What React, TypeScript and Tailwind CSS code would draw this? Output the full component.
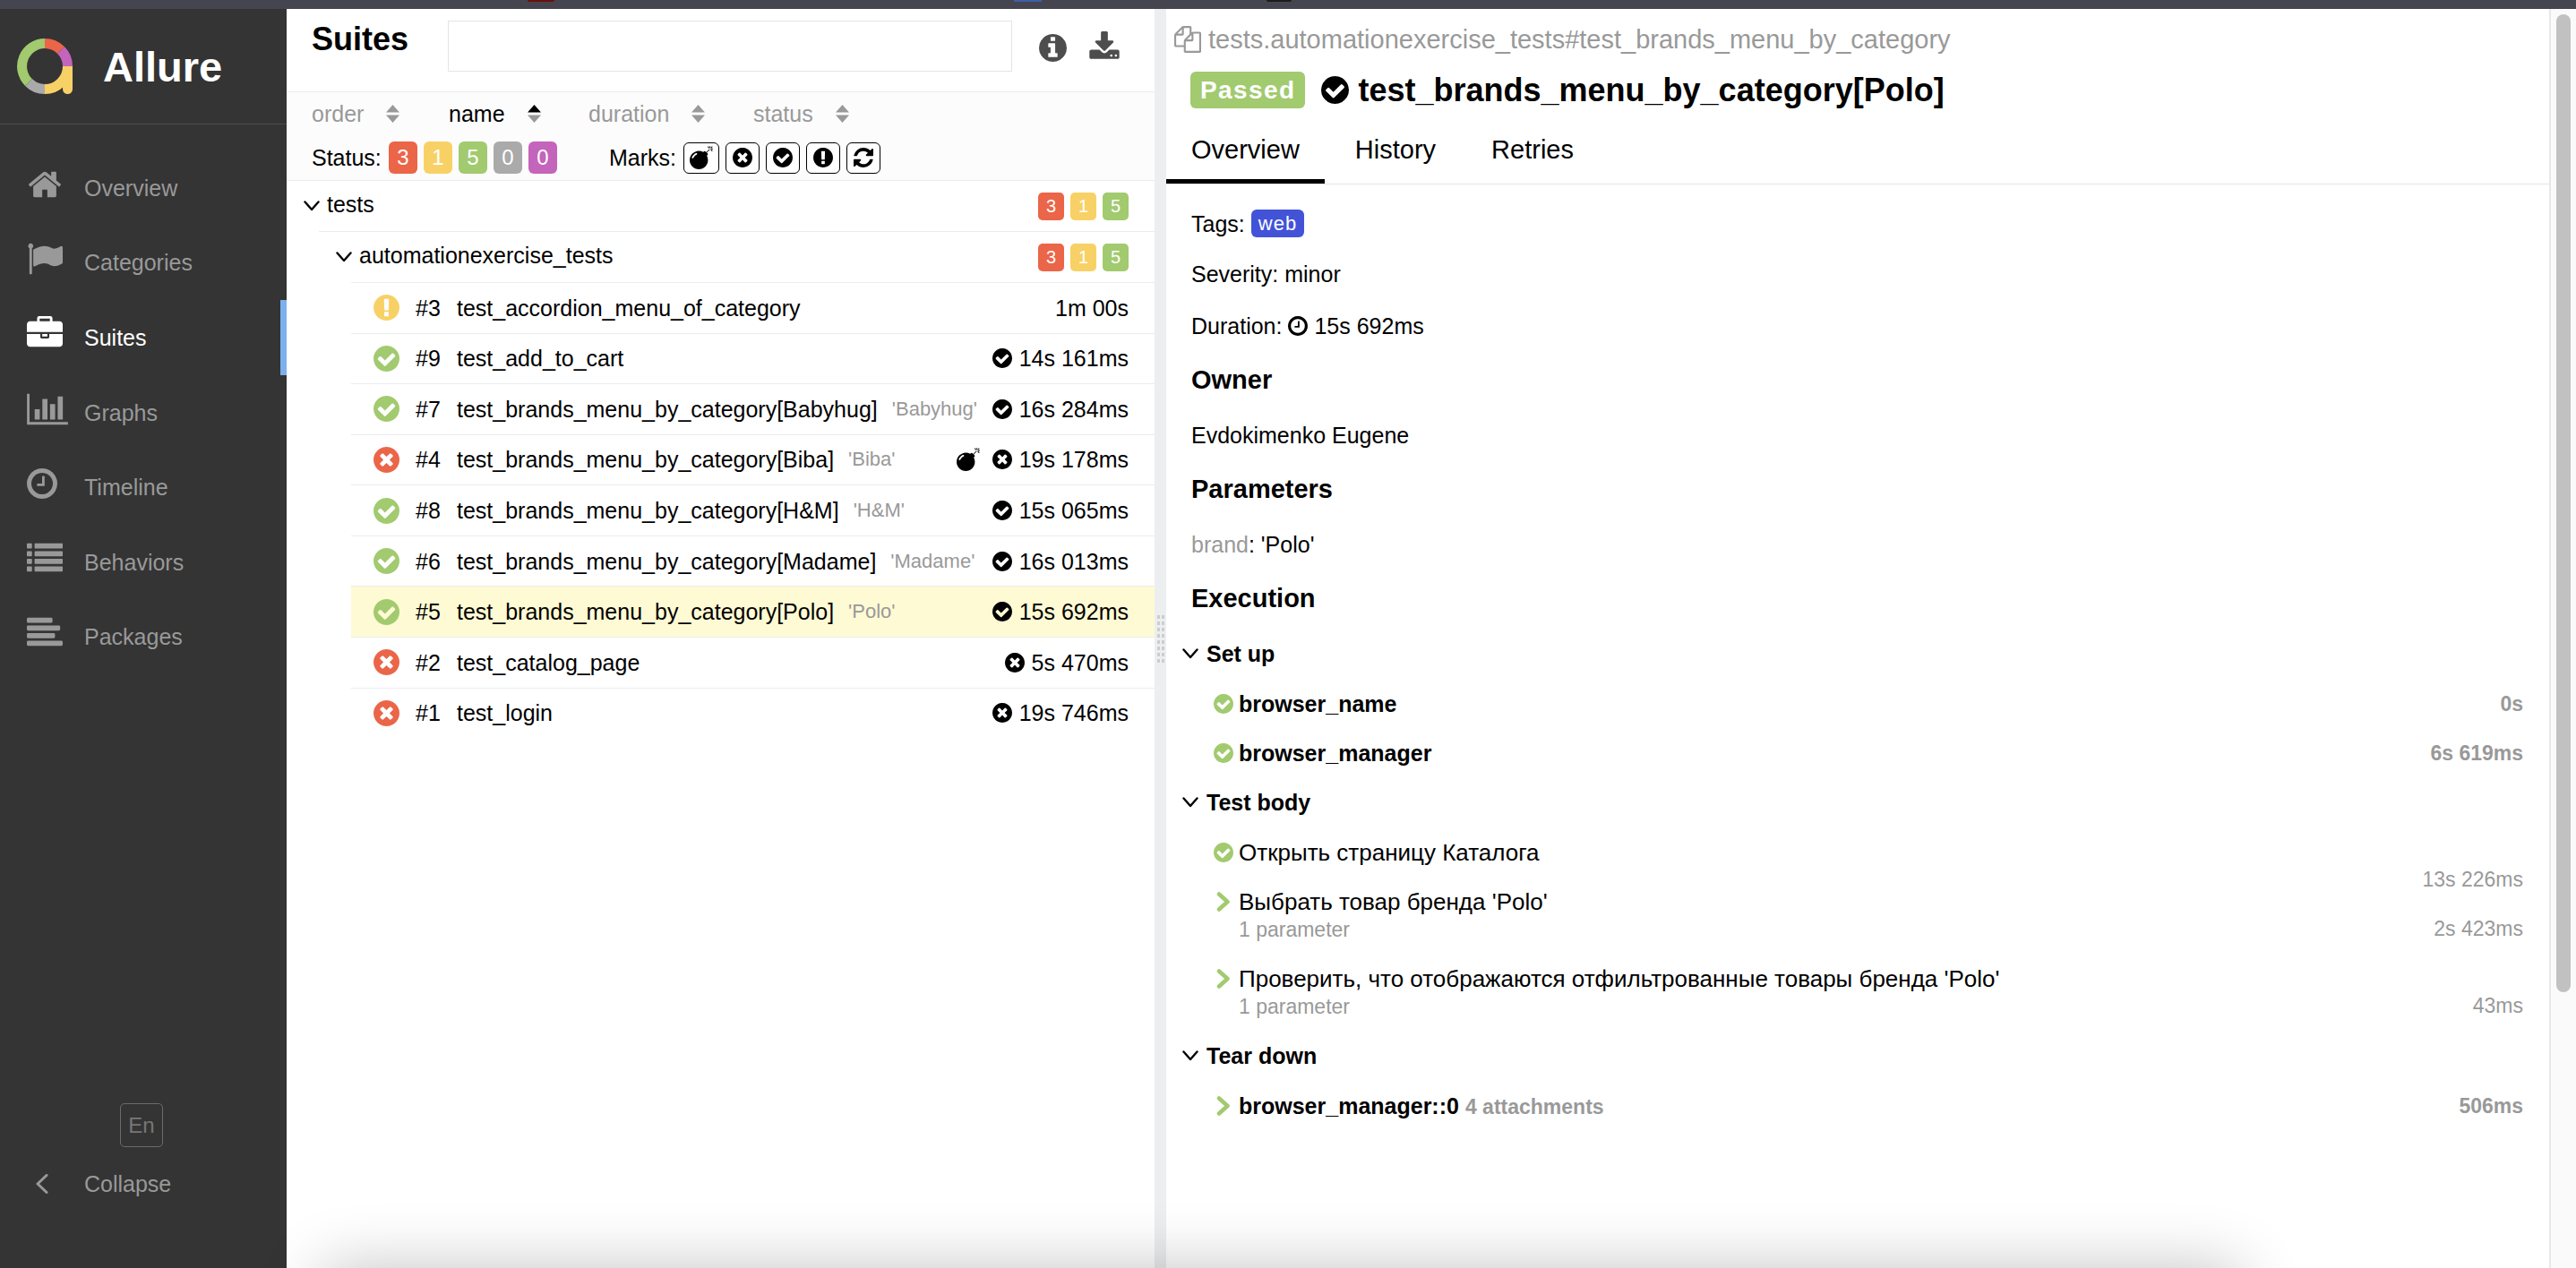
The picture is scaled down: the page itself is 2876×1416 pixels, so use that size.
import React from "react";

const GLYPHS = {
  check:
    "M1412 734q0-28-18-46l-91-90q-19-19-45-19t-45 19l-408 407-226-226q-19-19-45-19t-45 19l-91 90q-18 18-18 46 0 27 18 45l362 362q19 19 45 19 27 0 46-19l543-543q18-18 18-45zm252 162q0 209-103 385.5t-279.5 279.5-385.5 103-385.5-103-279.5-279.5-103-385.5 103-385.5 279.5-279.5 385.5-103 385.5 103 279.5 279.5 103 385.5z",
  times:
    "M1277 1122q0-26-19-45l-181-181 181-181q19-19 19-45 0-27-19-46l-90-90q-19-19-46-19-26 0-45 19l-181 181-181-181q-19-19-45-19-27 0-46 19l-90 90q-19 19-19 46 0 26 19 45l181 181-181 181q-19 19-19 45 0 27 19 46l90 90q19 19 46 19 26 0 45-19l181-181 181 181q19 19 45 19 27 0 46-19l90-90q19-19 19-46zm387-226q0 209-103 385.5t-279.5 279.5-385.5 103-385.5-103-279.5-279.5-103-385.5 103-385.5 279.5-279.5 385.5-103 385.5 103 279.5 279.5 103 385.5z",
  exclamation:
    "M896 128q209 0 385.5 103t279.5 279.5 103 385.5-103 385.5-279.5 279.5-385.5 103-385.5-103-279.5-279.5-103-385.5 103-385.5 279.5-279.5 385.5-103zm128 1247v-190q0-14-9-23.5t-22-9.5h-192q-13 0-23 10t-10 23v190q0 13 10 23t23 10h192q13 0 22-9.5t9-23.5zm-2-344l18-621q0-12-10-18-10-8-24-8h-220q-14 0-24 8-10 6-10 18l17 621q0 10 10 17.5t24 7.5h185q14 0 23.5-7.5t10.5-17.5z",
  info: "M1152 1376v-160q0-14-9-23t-23-9h-96v-512q0-14-9-23t-23-9h-320q-14 0-23 9t-9 23v160q0 14 9 23t23 9h96v320h-96q-14 0-23 9t-9 23v160q0 14 9 23t23 9h448q14 0 23-9t9-23zm-128-896v-160q0-14-9-23t-23-9h-192q-14 0-23 9t-9 23v160q0 14 9 23t23 9h192q14 0 23-9t9-23zm640 416q0 209-103 385.5t-279.5 279.5-385.5 103-385.5-103-279.5-279.5-103-385.5 103-385.5 279.5-279.5 385.5-103 385.5 103 279.5 279.5 103 385.5z",
  clock:
    "M1024 544v448q0 14-9 23t-23 9h-320q-14 0-23-9t-9-23v-64q0-14 9-23t23-9h224v-352q0-14 9-23t23-9h64q14 0 23 9t9 23zm416 352q0-148-73-273t-198-198-273-73-273 73-198 198-73 273 73 273 198 198 273 73 273-73 198-198 73-273zm224 0q0 209-103 385.5t-279.5 279.5-385.5 103-385.5-103-279.5-279.5-103-385.5 103-385.5 279.5-279.5 385.5-103 385.5 103 279.5 279.5 103 385.5z",
  refresh:
    "M1639 1056q0 5-1 7-64 268-268 434.5t-478 166.5q-146 0-282.5-55t-243.5-157l-129 129q-19 19-45 19t-45-19-19-45v-448q0-26 19-45t45-19h448q26 0 45 19t19 45-19 45l-137 137q71 66 161 102t187 36q134 0 250-65t186-179q11-17 53-117 8-23 30-23h192q13 0 22.5 9.5t9.5 22.5zm25-800v448q0 26-19 45t-45 19h-448q-26 0-45-19t-19-45 19-45l138-138q-148-137-349-137-134 0-250 65t-186 179q-11 17-53 117-8 23-30 23h-199q-13 0-22.5-9.5t-9.5-22.5v-7q65-268 270-434.5t480-166.5q146 0 284 55.5t245 156.5l130-129q19-19 45-19t45 19 19 45z",
  home: "M1472 992v480q0 26-19 45t-45 19h-384v-384h-256v384h-384q-26 0-45-19t-19-45v-480q0-1 .5-3t.5-3l575-474 575 474q1 2 1 6zm223-69l-62 74q-8 9-21 11h-3q-13 0-21-7l-692-577-692 577q-12 8-24 7-13-2-21-11l-62-74q-8-10-7-23.5t11-21.5l719-599q32-26 76-26t76 26l244 204v-195q0-14 9-23t23-9h192q14 0 23 9t9 23v408l219 182q10 8 11 21.5t-7 23.5z",
  flag: "M320 256q0 72-64 110v1266q0 13-9.5 22.5t-22.5 9.5h-64q-13 0-22.5-9.5t-9.5-22.5v-1266q-64-38-64-110 0-53 37.5-90.5t90.5-37.5 90.5 37.5 37.5 90.5zm1472 64v763q0 25-12.5 38.5t-39.5 27.5q-215 116-369 116-61 0-123.5-22t-108.5-48-115.5-48-142.5-22q-192 0-464 146-17 9-33 9-26 0-45-19t-19-45v-742q0-32 31-55 21-14 79-43 236-120 421-120 107 0 200 29t219 88q38 19 88 19 54 0 117.5-21t110-47 88-47 54.5-21q26 0 45 19t19 45z",
  briefcase:
    "M640 256h512v-128h-512v128zm1152 640v480q0 66-47 113t-113 47h-1472q-66 0-113-47t-47-113v-480h672v160q0 26 19 45t45 19h320q26 0 45-19t19-45v-160h672zm-768 0v128h-256v-128h256zm768-480v384h-1792v-384q0-66 47-113t113-47h352v-160q0-40 28-68t68-28h576q40 0 68 28t28 68v160h352q66 0 113 47t47 113z",
  chart:
    "M640 896v512h-256v-512h256zm384-512v1024h-256v-1024h256zm1024 1152v128h-2048v-1536h128v1408h1920zm-640-896v768h-256v-768h256zm384-384v1152h-256v-1152h256z",
  list: "M0 1312q0-32 32-32h192q32 0 32 32v192q0 32-32 32h-192q-32 0-32-32zM0 928q0-32 32-32h192q32 0 32 32v192q0 32-32 32h-192q-32 0-32-32zM0 544q0-32 32-32h192q32 0 32 32v192q0 32-32 32h-192q-32 0-32-32zM0 160q0-32 32-32h192q32 0 32 32v192q0 32-32 32h-192q-32 0-32-32zM384 1312q0-32 32-32h1344q32 0 32 32v192q0 32-32 32h-1344q-32 0-32-32zM384 928q0-32 32-32h1344q32 0 32 32v192q0 32-32 32h-1344q-32 0-32-32zM384 544q0-32 32-32h1344q32 0 32 32v192q0 32-32 32h-1344q-32 0-32-32zM384 160q0-32 32-32h1344q32 0 32 32v192q0 32-32 32h-1344q-32 0-32-32z",
  align:
    "M0 1344q0-64 64-64h1664q64 0 64 64v128q0 64-64 64h-1664q-64 0-64-64zM0 960q0-64 64-64h1280q64 0 64 64v128q0 64-64 64h-1280q-64 0-64-64zM0 576q0-64 64-64h1536q64 0 64 64v128q0 64-64 64h-1536q-64 0-64-64zM0 192q0-64 64-64h1152q64 0 64 64v128q0 64-64 64h-1152q-64 0-64-64z",
  bomb: "M571 589q-10-25-34-35t-49 0q-108 44-191 127t-127 191q-10 25 0 49t35 34q13 5 24 5 42 0 60-40 34-84 98.5-148.5t148.5-98.5q25-11 35-35t0-49zm942-356l46 46-244 243 68 68q19 19 19 45.5t-19 45.5l-64 64q89 161 89 343 0 143-55.5 273.5t-150 225-225 150-273.5 55.5-273.5-55.5-225-150-150-225-55.5-273.5 55.5-273.5 150-225 225-150 273.5-55.5q182 0 343 89l64-64q19-19 45.5-19t45.5 19l68 68zm8-56q-10 10-22 10-13 0-23-10l-91-90q-9-10-9-23t9-23q10-9 23-9t23 9l90 91q10 9 10 22.5t-10 22.5zm230 230q-11 9-23 9t-23-9l-90-91q-10-9-10-22.5t10-22.5q9-10 22.5-10t22.5 10l91 90q9 10 9 23t-9 23zm41-183q0 14-9 23t-23 9h-96q-14 0-23-9t-9-23 9-23 23-9h96q14 0 23 9t9 23zm-192-192v96q0 14-9 23t-23 9-23-9-9-23v-96q0-14 9-23t23-9 23 9 9 23zm151 55l-91 90q-10 10-22 10-13 0-23-10-10-9-10-22.5t10-22.5l90-91q10-9 23-9t23 9q9 10 9 23t-9 23z",
  download:
    "M1344 1344q0-26-19-45t-45-19-45 19-19 45 19 45 45 19 45-19 19-45zm256 0q0-26-19-45t-45-19-45 19-19 45 19 45 45 19 45-19 19-45zm128-224v320q0 40-28 68t-68 28h-1472q-40 0-68-28t-28-68v-320q0-40 28-68t68-28h465l135 136q58 56 136 56t136-56l136-136h464q40 0 68 28t28 68zm-325-569q17 41-14 70l-448 448q-18 19-45 19t-45-19l-448-448q-31-29-14-70 17-39 59-39h256v-448q0-26 19-45t45-19h256q26 0 45 19t19 45v448h256q42 0 59 39z",
  copy: "M1696 384q40 0 68 28t28 68v1216q0 40-28 68t-68 28h-960q-40 0-68-28t-28-68v-288h-544q-40 0-68-28t-28-68v-672q0-40 20-88t48-76l408-408q28-28 76-48t88-20h416q40 0 68 28t28 68v328q68-40 128-40h416zm-544 213l-299 299h299v-299zm-640-384l-299 299h299v-299zm196 647l316-316v-416h-384v416q0 40-28 68t-68 28h-416v640h512v-256q0-40 20-88t48-76zm956 804v-1152h-384v416q0 40-28 68t-68 28h-416v640h896z",
};

type Glyph = keyof typeof GLYPHS;

function Icon({
  name,
  className,
  box = "0 0 1792 1792",
}: {
  name: Glyph;
  className: string;
  box?: string;
}) {
  return (
    <svg viewBox={box} fill="currentColor" aria-hidden="true" className={"shrink-0 " + className}>
      <path d={GLYPHS[name]} />
    </svg>
  );
}

/** Round glyphs occupy 1536 of the 1792 units; this box trims their side space. */
const TIGHT = "128 128 1536 1536";

function DownArrow() {
  return (
    <svg
      viewBox="0 0 18 12"
      fill="none"
      stroke="currentColor"
      strokeWidth="2.4"
      strokeLinecap="round"
      strokeLinejoin="round"
      aria-hidden="true"
      className="h-3 w-[18px] shrink-0"
    >
      <path d="M1.5 1.5L9 10L16.5 1.5" />
    </svg>
  );
}

function Logo() {
  return (
    <svg viewBox="0 0 62 64" fill="none" aria-hidden="true" className="h-16 w-[62px] shrink-0">
      <g strokeWidth="11">
        <path d="M31 6.5A25.5 25.5 0 0 1 49 14" stroke="#eb6549" />
        <path d="M49 14A25.5 25.5 0 0 1 56.500 32" stroke="#c464bb" />
        <path d="M56.500 32A25.5 25.5 0 0 1 31 57.500" stroke="#f8d166" />
        <path d="M31 57.500A25.5 25.5 0 0 1 13 50" stroke="#aaa" />
        <path d="M13 50A25.5 25.5 0 0 1 31 6.500" stroke="#a2ca6f" />
      </g>
      <path d="M51 32H62V57.500a5.500 5.500 0 0 1-11 0Z" fill="#f8d166" />
    </svg>
  );
}

const NAV: { label: string; icon: Glyph; box?: string; size: string; active?: boolean }[] = [
  { label: "Overview", icon: "home", size: "h-10 w-10" },
  { label: "Categories", icon: "flag", size: "h-10 w-10" },
  { label: "Suites", icon: "briefcase", size: "h-10 w-10", active: true },
  { label: "Graphs", icon: "chart", box: "0 0 2048 1792", size: "h-10 w-[46px]" },
  { label: "Timeline", icon: "clock", box: "128 0 1536 1792", size: "h-10 w-[34px]" },
  { label: "Behaviors", icon: "list", size: "h-10 w-10" },
  { label: "Packages", icon: "align", size: "h-10 w-10" },
];

function Sidebar() {
  return (
    <aside className="flex w-[320px] shrink-0 flex-col bg-[#343434] text-[#999]">
      <a href="#" className="flex h-[129px] items-center gap-[34px] border-b border-[#4d4d4d] pl-[19px] text-white">
        <Logo />
        <span className="text-[47px] leading-none font-bold">Allure</span>
      </a>
      <nav className="mt-[29px] flex h-[585px] flex-col">
        {NAV.map((n) => (
          <a
            key={n.label}
            href="#"
            className={
              n.active
                ? "flex flex-1 items-center border-r-[7px] border-[#7ab1ee] pl-[30px] text-white"
                : "flex flex-1 items-center pl-[30px]"
            }
          >
            <span className="mb-2 w-16">
              <Icon name={n.icon} box={n.box} className={n.size} />
            </span>
            {n.label}
          </a>
        ))}
      </nav>
      <div className="mt-auto mb-[77px] flex flex-col gap-6">
        <button className="ml-[134px] h-[49px] w-12 rounded-[5px] border border-[#6b6b6b] text-2xl text-[#777]">
          En
        </button>
        <button className="flex h-[34px] items-center text-left">
          <span className="w-[94px] pl-10">
            <svg
              viewBox="0 0 14 22"
              fill="none"
              stroke="currentColor"
              strokeWidth="3"
              strokeLinecap="round"
              strokeLinejoin="round"
              aria-hidden="true"
              className="h-[22px] w-3.5"
            >
              <path d="M12 1.500L2 11L12 20.500" />
            </svg>
          </span>
          Collapse
        </button>
      </div>
    </aside>
  );
}

function Sorter({ label, asc, className }: { label: string; asc?: boolean; className: string }) {
  return (
    <button className={"flex items-center text-left " + (asc ? "text-black " : "text-[#999] ") + className}>
      {label}
      <svg viewBox="0 0 15 20" aria-hidden="true" className="h-5 w-[15px]">
        <path d="M7.500 0L15 8.500H0Z" fill={asc ? "#000" : "#999"} />
        <path d="M7.500 20L15 11.500H0Z" fill="#999" />
      </svg>
    </button>
  );
}

const STATUS = [
  { label: "failed", n: 3, bg: "bg-[#eb6549]" },
  { label: "broken", n: 1, bg: "bg-[#f8d166]" },
  { label: "passed", n: 5, bg: "bg-[#a2ca6f]" },
  { label: "skipped", n: 0, bg: "bg-[#aaa]" },
  { label: "unknown", n: 0, bg: "bg-[#c464bb]" },
];

const MARKS: { label: string; icon: Glyph; wide?: boolean }[] = [
  { label: "Newly failed", icon: "bomb", wide: true },
  { label: "Newly broken", icon: "times" },
  { label: "Newly passed", icon: "check" },
  { label: "Flaky", icon: "exclamation" },
  { label: "Retried", icon: "refresh" },
];

type Test = {
  n: number;
  name: string;
  param?: string;
  status: "broken" | "passed" | "failed";
  time: string;
  bomb?: boolean;
  mark?: Glyph;
  selected?: boolean;
};

const TESTS: Test[] = [
  { n: 3, name: "test_accordion_menu_of_category", status: "broken", time: "1m 00s" },
  { n: 9, name: "test_add_to_cart", status: "passed", time: "14s 161ms", mark: "check" },
  { n: 7, name: "test_brands_menu_by_category[Babyhug]", param: "'Babyhug'", status: "passed", time: "16s 284ms", mark: "check" },
  { n: 4, name: "test_brands_menu_by_category[Biba]", param: "'Biba'", status: "failed", time: "19s 178ms", mark: "times", bomb: true },
  { n: 8, name: "test_brands_menu_by_category[H&M]", param: "'H&M'", status: "passed", time: "15s 065ms", mark: "check" },
  { n: 6, name: "test_brands_menu_by_category[Madame]", param: "'Madame'", status: "passed", time: "16s 013ms", mark: "check" },
  { n: 5, name: "test_brands_menu_by_category[Polo]", param: "'Polo'", status: "passed", time: "15s 692ms", mark: "check", selected: true },
  { n: 2, name: "test_catalog_page", status: "failed", time: "5s 470ms", mark: "times" },
  { n: 1, name: "test_login", status: "failed", time: "19s 746ms", mark: "times" },
];

const STATUS_ICON: Record<Test["status"], Glyph> = { broken: "exclamation", passed: "check", failed: "times" };
const STATUS_COLOR: Record<Test["status"], string> = {
  broken: "text-[#f8d166]",
  passed: "text-[#a2ca6f]",
  failed: "text-[#eb6549]",
};

function GroupRow({ label }: { label: string }) {
  return (
    <button className="flex h-14 w-full items-center gap-2 pr-[29px] pl-[19px] text-left">
      <DownArrow />
      <span className="pb-1">{label}</span>
      <span className="ml-auto flex gap-[7px] text-xl leading-[31px] text-white">
        {STATUS.slice(0, 3).map((s) => (
          <span key={s.label} className={"w-[29px] rounded-[5px] text-center " + s.bg}>
            {s.n}
          </span>
        ))}
      </span>
    </button>
  );
}

function TestRow({ t }: { t: Test }) {
  return (
    <li className="flex flex-1 border-b border-[#ebecee] last:border-0">
      <a
        href="#"
        className={"flex flex-1 items-center pr-[29px] pl-[25px] whitespace-nowrap " + (t.selected ? "bg-[#fefad3]" : "")}
      >
        <Icon name={STATUS_ICON[t.status]} box={TIGHT} className={"h-[29px] w-[29px] " + STATUS_COLOR[t.status]} />
        <span className="w-16 pl-[18px]">#{t.n}</span>
        <span>{t.name}</span>
        {t.param && <span className="ml-4 text-[22px] text-[#999]">{t.param}</span>}
        <span className="ml-auto flex items-center">
          {t.bomb && <Icon name="bomb" className="mr-3.5 h-[26px] w-[26px]" />}
          {t.mark && <Icon name={t.mark} box={TIGHT} className="mr-2 h-[22px] w-[22px]" />}
          {t.time}
        </span>
      </a>
    </li>
  );
}

function SuitesPane() {
  return (
    <section className="bg-white">
      <header className="flex h-[92px] pt-[13px]">
        <h1 className="w-[180px] pl-7 text-4xl leading-[42px] font-bold">Suites</h1>
        <input aria-label="Search" className="h-[57px] min-w-0 flex-1 border border-[#e4e4e4] bg-white px-3 outline-none" />
        <button aria-label="Info" className="mt-[15px] ml-[30px] h-[31px] text-[#4d4d4d]">
          <Icon name="info" box={TIGHT} className="h-[31px] w-[31px]" />
        </button>
        <button aria-label="Download CSV" className="mt-3 mr-[38px] ml-6 h-9 text-[#4d4d4d]">
          <Icon name="download" className="h-9 w-9" />
        </button>
      </header>
      <div className="h-[100px] border-y border-[#ebecee] bg-[#fcfcfc] pl-7 leading-9">
        <div className="flex pt-1.5">
          <Sorter label="order" className="w-[153px] gap-[25px]" />
          <Sorter label="name" asc className="w-[156px] gap-[25px]" />
          <Sorter label="duration" className="w-[184px] gap-[25px]" />
          <Sorter label="status" className="gap-[25px]" />
        </div>
        <div className="mt-[13px] flex items-center">
          <span className="w-[86px]">Status:</span>
          <div className="flex w-[246px] gap-[7px] text-2xl leading-9 text-white">
            {STATUS.map((s) => (
              <button key={s.label} aria-label={s.label} className={"h-9 w-8 rounded-md " + s.bg}>
                {s.n}
              </button>
            ))}
          </div>
          <span className="w-[83px]">Marks:</span>
          <div className="flex gap-[7px]">
            {MARKS.map((m) => (
              <button
                key={m.label}
                aria-label={m.label}
                className={
                  "flex h-[35px] items-center justify-center rounded-md border border-black bg-white " +
                  (m.wide ? "w-10" : "w-[38px]")
                }
              >
                {m.wide ? (
                  <Icon name={m.icon} className="h-[26px] w-[26px]" />
                ) : (
                  <Icon name={m.icon} box={TIGHT} className="h-[22px] w-[22px]" />
                )}
              </button>
            ))}
          </div>
        </div>
      </div>
      <GroupRow label="tests" />
      <div className="ml-9 border-t border-[#ebecee]">
        <GroupRow label="automationexercise_tests" />
      </div>
      <ul className="ml-[72px] flex h-[509px] flex-col border-t border-[#ebecee]">
        {TESTS.map((t) => (
          <TestRow key={t.n} t={t} />
        ))}
      </ul>
    </section>
  );
}

function Gutter() {
  return (
    <div role="separator" aria-orientation="vertical" className="flex items-center justify-center bg-[#edeef0]">
      <div className="grid grid-cols-2 gap-x-[2px] gap-y-[3px]">
        {Array.from({ length: 16 }, (_, i) => (
          <span key={i} className="h-1 w-[3px] bg-[#cdcdcf]" />
        ))}
      </div>
    </div>
  );
}

function StageHeading({ children }: { children: string }) {
  return (
    <button className="flex h-14 items-center gap-[9px] pl-[18px] font-bold">
      <DownArrow />
      {children}
    </button>
  );
}

function Step({
  name,
  time,
  note,
  detail,
  bold,
  open,
  low,
}: {
  name: string;
  time: string;
  note?: string;
  detail?: string;
  bold?: boolean;
  open?: boolean;
  low?: boolean;
}) {
  return (
    <div
      className={
        "flex pt-[11px] pr-[29px] pl-[53px] " +
        (detail ? "h-[86px] " : "h-[55px] ") +
        (bold ? "font-bold" : "text-[26px]")
      }
    >
      <span className="flex h-[34px] w-7 shrink-0 items-center text-[#a2ca6f]">
        {open ? (
          <svg
            viewBox="0 0 16 22"
            fill="none"
            stroke="currentColor"
            strokeWidth="4.500"
            strokeLinecap="round"
            strokeLinejoin="round"
            aria-hidden="true"
            className="ml-[3px] h-[22px] w-4"
          >
            <path d="M3 2.500L12.500 11L3 19.500" />
          </svg>
        ) : (
          <Icon name="check" box={TIGHT} className="h-[22px] w-[22px]" />
        )}
      </span>
      <div>
        <a href="#" className="leading-[34px]">
          {name}
          {note && <span className="ml-[7px] text-[23px] text-[#999]">{note}</span>}
        </a>
        {detail && <div className="text-[23px] leading-7 text-[#999]">{detail}</div>}
      </div>
      <span className={"ml-auto text-[23px] leading-[34px] text-[#999] " + (low ? "pt-[30px]" : "")}>{time}</span>
    </div>
  );
}

function DetailsPane() {
  return (
    <section className="flex bg-white">
      <div className="min-w-0 flex-1">
        <div className="flex h-16 items-center gap-2 pt-1 pl-[9px] text-[29px] text-[#999]">
          <button aria-label="Copy" className="h-[30px]">
            <Icon name="copy" className="h-[30px] w-[30px]" />
          </button>
          tests.automationexercise_tests#test_brands_menu_by_category
        </div>
        <h2 className="flex h-[53px] items-center pl-[27px] text-[36px] leading-none font-bold">
          <span className="rounded-md bg-[#a2ca6f] px-[11px] text-[28px] leading-[41px] tracking-wider text-white">
            Passed
          </span>
          <Icon name="check" box={TIGHT} className="mr-2.5 ml-[18px] h-[31px] w-[31px]" />
          test_brands_menu_by_category[Polo]
        </h2>
        <div role="tablist" className="flex h-[79px] gap-1.5 border-b border-[#e4e4e4] text-[29px]">
          <button role="tab" aria-selected="true" className="border-b-[5px] border-black px-7 pt-1.5">
            Overview
          </button>
          <button role="tab" aria-selected="false" className="border-b-[5px] border-transparent px-7 pt-1.5">
            History
          </button>
          <button role="tab" aria-selected="false" className="border-b-[5px] border-transparent px-7 pt-1.5">
            Retries
          </button>
        </div>
        <div className="pt-3 pb-2 pl-7">
          <p className="flex h-[57px] items-center gap-[7px] pt-1.5">
            Tags:
            <span className="rounded-md bg-[#4253d8] px-2 text-[22px] leading-[31px] tracking-wider text-white">web</span>
          </p>
          <p className="h-[57px] pt-1.5 leading-[51px]">Severity: minor</p>
          <p className="flex h-[57px] items-center gap-[7px] pt-1.5">
            Duration: <Icon name="clock" box={TIGHT} className="h-[22px] w-[22px]" /> 15s 692ms
          </p>
          <h3 className="h-[61px] pt-2 text-[29px] leading-[55px] font-bold">Owner</h3>
          <p className="h-[61px] pt-1.5 leading-[61px]">Evdokimenko Eugene</p>
          <h3 className="h-[61px] pt-2 text-[29px] leading-[55px] font-bold">Parameters</h3>
          <p className="h-[61px] pt-1.5 leading-[61px]">
            <span className="text-[#999]">brand</span>: 'Polo'
          </p>
          <h3 className="h-[61px] pt-2 text-[29px] leading-[55px] font-bold">Execution</h3>
        </div>
        <StageHeading>Set up</StageHeading>
        <Step bold name="browser_name" time="0s" />
        <Step bold name="browser_manager" time="6s 619ms" />
        <StageHeading>Test body</StageHeading>
        <Step name="Открыть страницу Каталога" time="13s 226ms" low />
        <Step open name="Выбрать товар бренда 'Polo'" detail="1 parameter" time="2s 423ms" low />
        <Step
          open
          name="Проверить, что отображаются отфильтрованные товары бренда 'Polo'"
          detail="1 parameter"
          time="43ms"
          low
        />
        <StageHeading>Tear down</StageHeading>
        <Step bold open name="browser_manager::0" note="4 attachments" time="506ms" />
      </div>
      <div aria-hidden="true" className="w-[30px] border-l-2 border-[#e8e8e8] bg-[#fafafa] pt-1.5 pl-1.5">
        <div className="h-[78%] w-4 rounded-full bg-[#c1c1c1]" />
      </div>
    </section>
  );
}

export default function App() {
  return (
    <div className="relative flex min-h-screen flex-col overflow-hidden bg-[#343434] font-['Liberation_Sans',Arial,sans-serif] text-[25px] leading-[34px] text-black">
      <div className="flex h-2.5 shrink-0 items-start bg-[#45454f]">
        <span className="ml-[589px] h-[2px] w-[30px] rounded-b-sm bg-[#6b100c]" />
        <span className="ml-[513px] h-[2px] w-[31px] bg-[#3c5fa8]" />
        <span className="ml-[251px] h-[2px] w-7 rounded-b-sm bg-[#1c1c1c]" />
      </div>
      <div className="flex flex-1">
        <Sidebar />
        <main className="grid flex-1 grid-cols-[minmax(0,969fr)_13px_minmax(0,1574fr)]">
          <SuitesPane />
          <Gutter />
          <DetailsPane />
        </main>
      </div>
      <div
        aria-hidden="true"
        className="pointer-events-none absolute top-full right-[376px] left-[360px] h-40 shadow-[0_0_70px_rgba(0,0,0,0.24)]"
      />
    </div>
  );
}
